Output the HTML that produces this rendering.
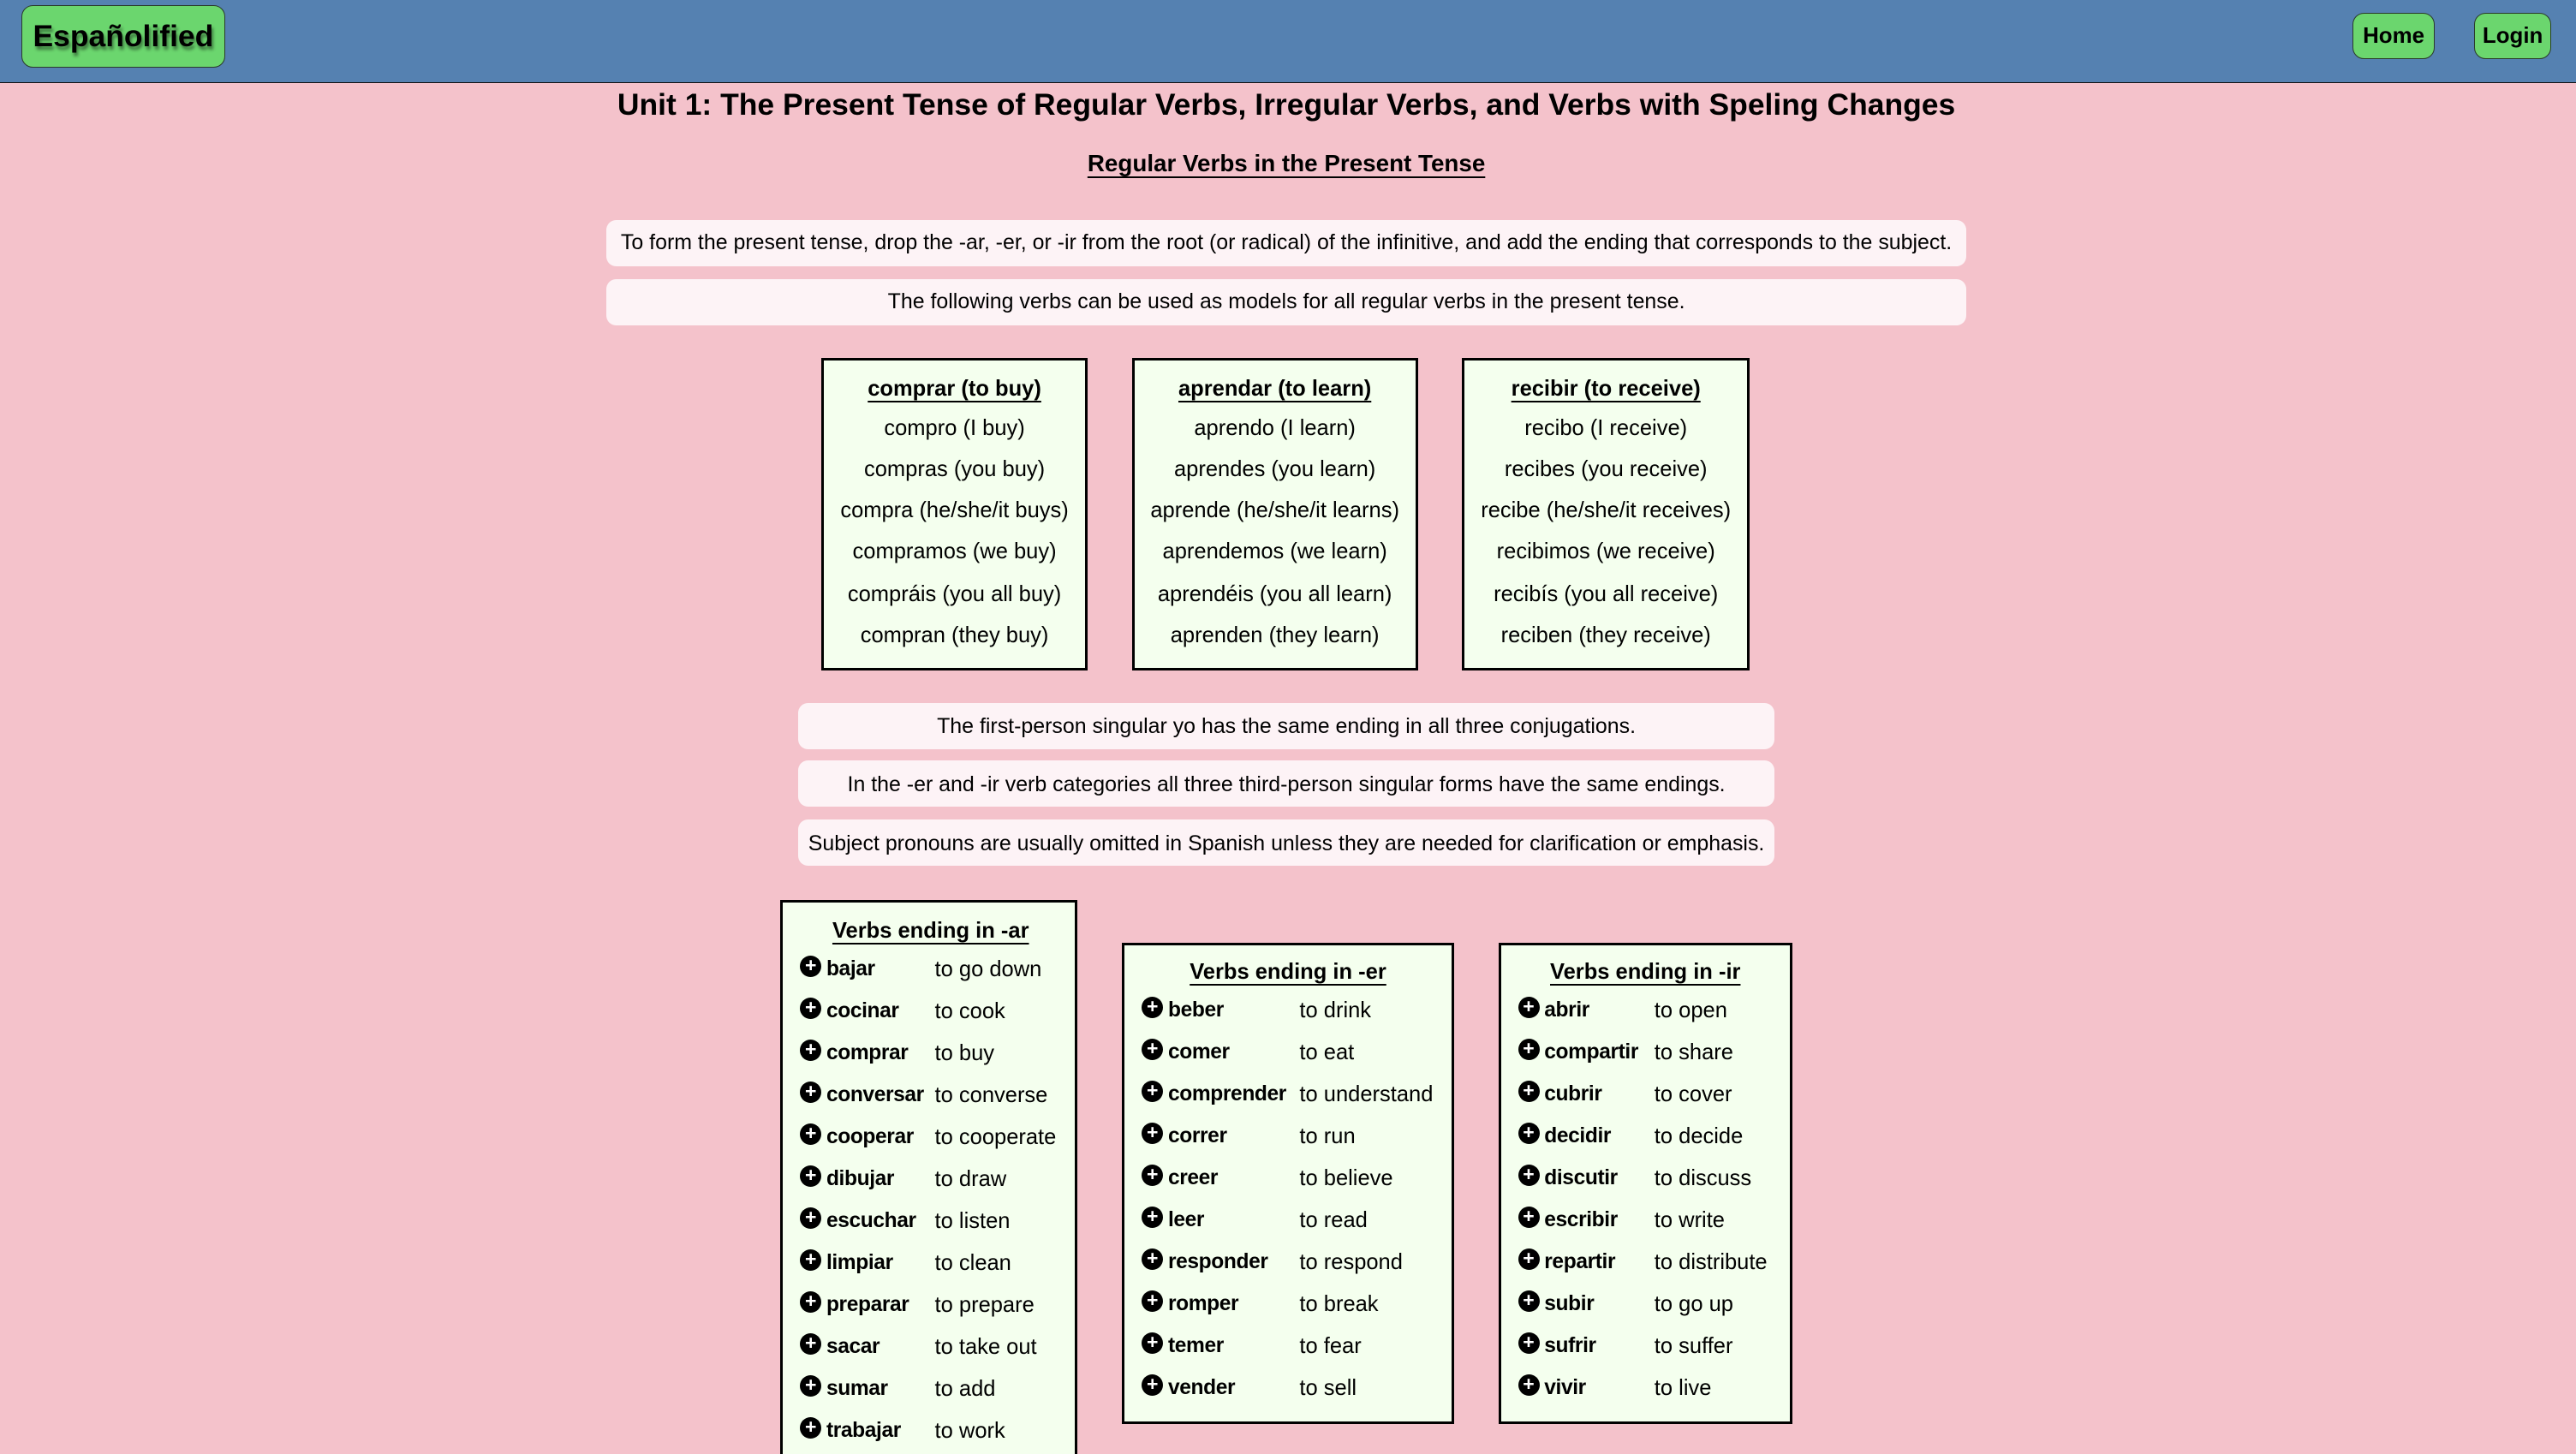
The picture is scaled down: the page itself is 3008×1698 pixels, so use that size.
<!DOCTYPE html>
<html><head><meta charset="utf-8"><style>
html,body{margin:0;padding:0;overflow:hidden;background:#f4c2cb}
#w{zoom:1.91837;width:1568px;height:885.2px;position:relative;font-family:"Liberation Sans",sans-serif;color:#000;overflow:hidden}
.a{position:absolute}
.hdr{left:0;top:0;width:1568px;height:50px;background:#5581b1;border-bottom:1px solid #111}
.btn{background:#6bd66e;border:1px solid #2a3a2a;border-radius:7px;font-weight:bold;display:flex;align-items:center;justify-content:center;box-sizing:border-box}
.c{text-align:center}
.note{background:#fdf3f6;border-radius:6px;font-size:13px;display:flex;align-items:center;justify-content:center;box-sizing:border-box;white-space:nowrap}
.tb{background:#f4ffee;border:2px solid #000;box-sizing:border-box}
.row{position:absolute;left:0;width:100%;text-align:center;font-size:13.3px}
.h{font-weight:bold;text-decoration:underline;text-underline-offset:3px}
.ic{position:absolute;width:13px;height:13px;border-radius:50%;background:#000;color:#fff;font-size:12px;font-weight:bold;line-height:12px;text-align:center}
.vw{position:absolute;font-size:12.8px;font-weight:bold;letter-spacing:-0.2px}
.vm{position:absolute;font-size:13.3px}
</style></head><body><div id="w">
<div class="a hdr"></div>
<div class="a btn" style="left:13px;top:3px;width:124px;height:38px;font-size:18.5px;text-shadow:1px 2px 2px rgba(0,0,0,.45)">Españolified</div>
<div class="a btn" style="left:1432px;top:8px;width:50px;height:28px;font-size:13.5px">Home</div>
<div class="a btn" style="left:1506px;top:8px;width:47px;height:28px;font-size:13.5px">Login</div>
<div class="a c" style="left:0;width:1566px;top:53px;font-size:18.5px;font-weight:bold">Unit 1: The Present Tense of Regular Verbs, Irregular Verbs, and Verbs with Speling Changes</div>
<div class="a c h" style="left:0;width:1566px;top:91px;font-size:14.5px">Regular Verbs in the Present Tense</div>
<div class="a note" style="left:369px;top:134px;width:828px;height:28px">To form the present tense, drop the -ar, -er, or -ir from the root (or radical) of the infinitive, and add the ending that corresponds to the subject.</div>
<div class="a note" style="left:369px;top:170px;width:828px;height:28px">The following verbs can be used as models for all regular verbs in the present tense.</div>

<div class="a tb" style="left:500px;top:218px;width:162px;height:190px">
<div class="row h" style="top:10px">comprar (to buy)</div>
<div class="row" style="top:34px">compro (I buy)</div>
<div class="row" style="top:59px">compras (you buy)</div>
<div class="row" style="top:84px">compra (he/she/it buys)</div>
<div class="row" style="top:109px">compramos (we buy)</div>
<div class="row" style="top:135px">compráis (you all buy)</div>
<div class="row" style="top:160px">compran (they buy)</div>
</div>
<div class="a tb" style="left:689px;top:218px;width:174px;height:190px">
<div class="row h" style="top:10px">aprendar (to learn)</div>
<div class="row" style="top:34px">aprendo (I learn)</div>
<div class="row" style="top:59px">aprendes (you learn)</div>
<div class="row" style="top:84px">aprende (he/she/it learns)</div>
<div class="row" style="top:109px">aprendemos (we learn)</div>
<div class="row" style="top:135px">aprendéis (you all learn)</div>
<div class="row" style="top:160px">aprenden (they learn)</div>
</div>
<div class="a tb" style="left:890px;top:218px;width:175px;height:190px">
<div class="row h" style="top:10px">recibir (to receive)</div>
<div class="row" style="top:34px">recibo (I receive)</div>
<div class="row" style="top:59px">recibes (you receive)</div>
<div class="row" style="top:84px">recibe (he/she/it receives)</div>
<div class="row" style="top:109px">recibimos (we receive)</div>
<div class="row" style="top:135px">recibís (you all receive)</div>
<div class="row" style="top:160px">reciben (they receive)</div>
</div>

<div class="a note" style="left:486px;top:428px;width:594px;height:28px;padding-top:1px">The first-person singular yo has the same ending in all three conjugations.</div>
<div class="a note" style="left:486px;top:463px;width:594px;height:28px;padding-top:1px">In the -er and -ir verb categories all three third-person singular forms have the same endings.</div>
<div class="a note" style="left:486px;top:499px;width:594px;height:28px;padding-top:1px">Subject pronouns are usually omitted in Spanish unless they are needed for clarification or emphasis.</div>

<div class="a tb" style="left:475px;top:548px;width:181px;height:360px">
<div class="row h" style="top:10px;left:1px">Verbs ending in -ar</div>
</div>
<div class="a tb" style="left:683px;top:574px;width:202px;height:293px">
<div class="row h" style="top:9px">Verbs ending in -er</div>
</div>
<div class="a tb" style="left:912px;top:574px;width:179px;height:293px">
<div class="row h" style="top:9px">Verbs ending in -ir</div>
</div>
<div id="lists"></div>
<script>
function L(ix,wx,mx,y0,items){var h='';items.forEach(function(p,i){var y=y0+i*25.5;
h+='<div class="ic" style="left:'+ix+'px;top:'+(y-8)+'px">+</div><div class="vw" style="left:'+wx+'px;top:'+(y-7)+'px">'+p[0]+'</div><div class="vm" style="left:'+mx+'px;top:'+(y-7)+'px">'+p[1]+'</div>';});
document.getElementById('lists').innerHTML+=h;}
L(487,503,569,590,[["bajar","to go down"],["cocinar","to cook"],["comprar","to buy"],["conversar","to converse"],["cooperar","to cooperate"],["dibujar","to draw"],["escuchar","to listen"],["limpiar","to clean"],["preparar","to prepare"],["sacar","to take out"],["sumar","to add"],["trabajar","to work"]]);
L(695,711,791,615,[["beber","to drink"],["comer","to eat"],["comprender","to understand"],["correr","to run"],["creer","to believe"],["leer","to read"],["responder","to respond"],["romper","to break"],["temer","to fear"],["vender","to sell"]]);
L(924,940,1007,615,[["abrir","to open"],["compartir","to share"],["cubrir","to cover"],["decidir","to decide"],["discutir","to discuss"],["escribir","to write"],["repartir","to distribute"],["subir","to go up"],["sufrir","to suffer"],["vivir","to live"]]);
</script>
</div></body></html>
